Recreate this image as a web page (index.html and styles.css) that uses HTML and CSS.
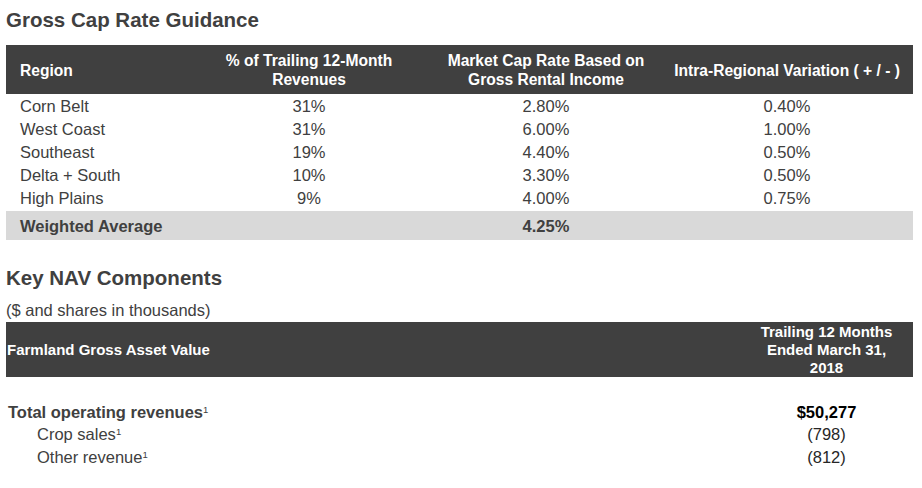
FILE: index.html
```html
<!DOCTYPE html>
<html>
<head>
<meta charset="utf-8">
<link rel="stylesheet" href="styles.css">
</head>
<body>
<div class="page">
  <h2 class="title">Gross Cap Rate Guidance</h2>
  <table class="guide">
    <colgroup><col class="g1"><col class="g2"><col class="g3"><col class="g4"></colgroup>
    <thead>
      <tr>
        <th class="left">Region</th>
        <th>% of Trailing 12-Month<br>Revenues</th>
        <th>Market Cap Rate Based on<br>Gross Rental Income</th>
        <th>Intra-Regional Variation ( + / - )</th>
      </tr>
    </thead>
    <tbody>
      <tr><td class="left">Corn Belt</td><td>31%</td><td>2.80%</td><td>0.40%</td></tr>
      <tr><td class="left">West Coast</td><td>31%</td><td>6.00%</td><td>1.00%</td></tr>
      <tr><td class="left">Southeast</td><td>19%</td><td>4.40%</td><td>0.50%</td></tr>
      <tr><td class="left">Delta + South</td><td>10%</td><td>3.30%</td><td>0.50%</td></tr>
      <tr class="last"><td class="left">High Plains</td><td>9%</td><td>4.00%</td><td>0.75%</td></tr>
      <tr class="avg"><td class="left">Weighted Average</td><td></td><td>4.25%</td><td></td></tr>
    </tbody>
  </table>

  <h2 class="title title-nav">Key NAV Components</h2>
  <p class="note">($ and shares in thousands)</p>
  <table class="nav">
    <colgroup><col class="n1"><col class="n2"></colgroup>
    <thead>
      <tr>
        <th class="left">Farmland Gross Asset Value</th>
        <th>Trailing 12 Months Ended March 31, 2018</th>
      </tr>
    </thead>
    <tbody>
      <tr class="spacer"><td></td><td></td></tr>
      <tr class="total"><td class="label">Total operating revenues<sup>1</sup></td><td class="val">$50,277</td></tr>
      <tr><td class="label sub">Crop sales<sup>1</sup></td><td class="val">(798)</td></tr>
      <tr><td class="label sub">Other revenue<sup>1</sup></td><td class="val">(812)</td></tr>
    </tbody>
  </table>
</div>
</body>
</html>
```

FILE: styles.css
```css
body {
  margin: 0;
  background: #ffffff;
  font-family: "Liberation Sans", Arial, sans-serif;
  color: #404040;
}

.page {
  padding: 8px 9px 0 6px;
}

.title {
  margin: 0;
  font-size: 20.5px;
  line-height: 24px;
  font-weight: bold;
  color: #404040;
}

table {
  width: 100%;
  border-collapse: collapse;
  table-layout: fixed;
}

th, td {
  padding: 0;
}

/* Gross cap rate table */
.guide {
  margin-top: 13px;
}

.g1 { width: 181px; }
.g2 { width: 244px; }
.g3 { width: 230px; }
.g4 { width: 252px; }

.guide th {
  background: #404040;
  color: #ffffff;
  font-size: 15.6px;
  line-height: 19px;
  font-weight: bold;
  text-align: center;
  vertical-align: middle;
  padding: 6px 2px 5px;
}

.guide td {
  font-size: 16.5px;
  line-height: 22px;
  padding-top: 1px;
  text-align: center;
  color: #404040;
}

.guide .left {
  text-align: left;
  padding-left: 14px;
}

.guide .last td {
  padding-bottom: 2px;
}

.guide .avg td {
  background: #d9d9d9;
  font-weight: bold;
  line-height: 28px;
}

/* NAV */
.title-nav {
  margin-top: 26px;
}

.note {
  margin: 11px 0 2px;
  font-size: 16.5px;
  line-height: 19px;
  color: #404040;
}

.n2 { width: 173px; }

.nav th {
  background: #404040;
  color: #ffffff;
  font-size: 15px;
  line-height: 18px;
  font-weight: bold;
  text-align: center;
  vertical-align: middle;
  padding: 1px 10px 0;
}

.nav th.left {
  text-align: left;
  padding-left: 1px;
}

.nav td {
  font-size: 16.5px;
  line-height: 23px;
}

.nav .spacer td {
  height: 23px;
}

.nav .total td {
  padding-top: 1px;
  line-height: 22px;
}

.nav .label {
  padding-left: 2px;
  color: #404040;
}

.nav .sub {
  padding-left: 31px;
}

.nav .val {
  text-align: center;
  color: #262626;
}

.nav .total td {
  font-weight: bold;
}

.nav .total .val {
  color: #000000;
}

sup {
  font-size: 9.5px;
  font-weight: normal;
  line-height: 0;
  vertical-align: 5px;
}
```
